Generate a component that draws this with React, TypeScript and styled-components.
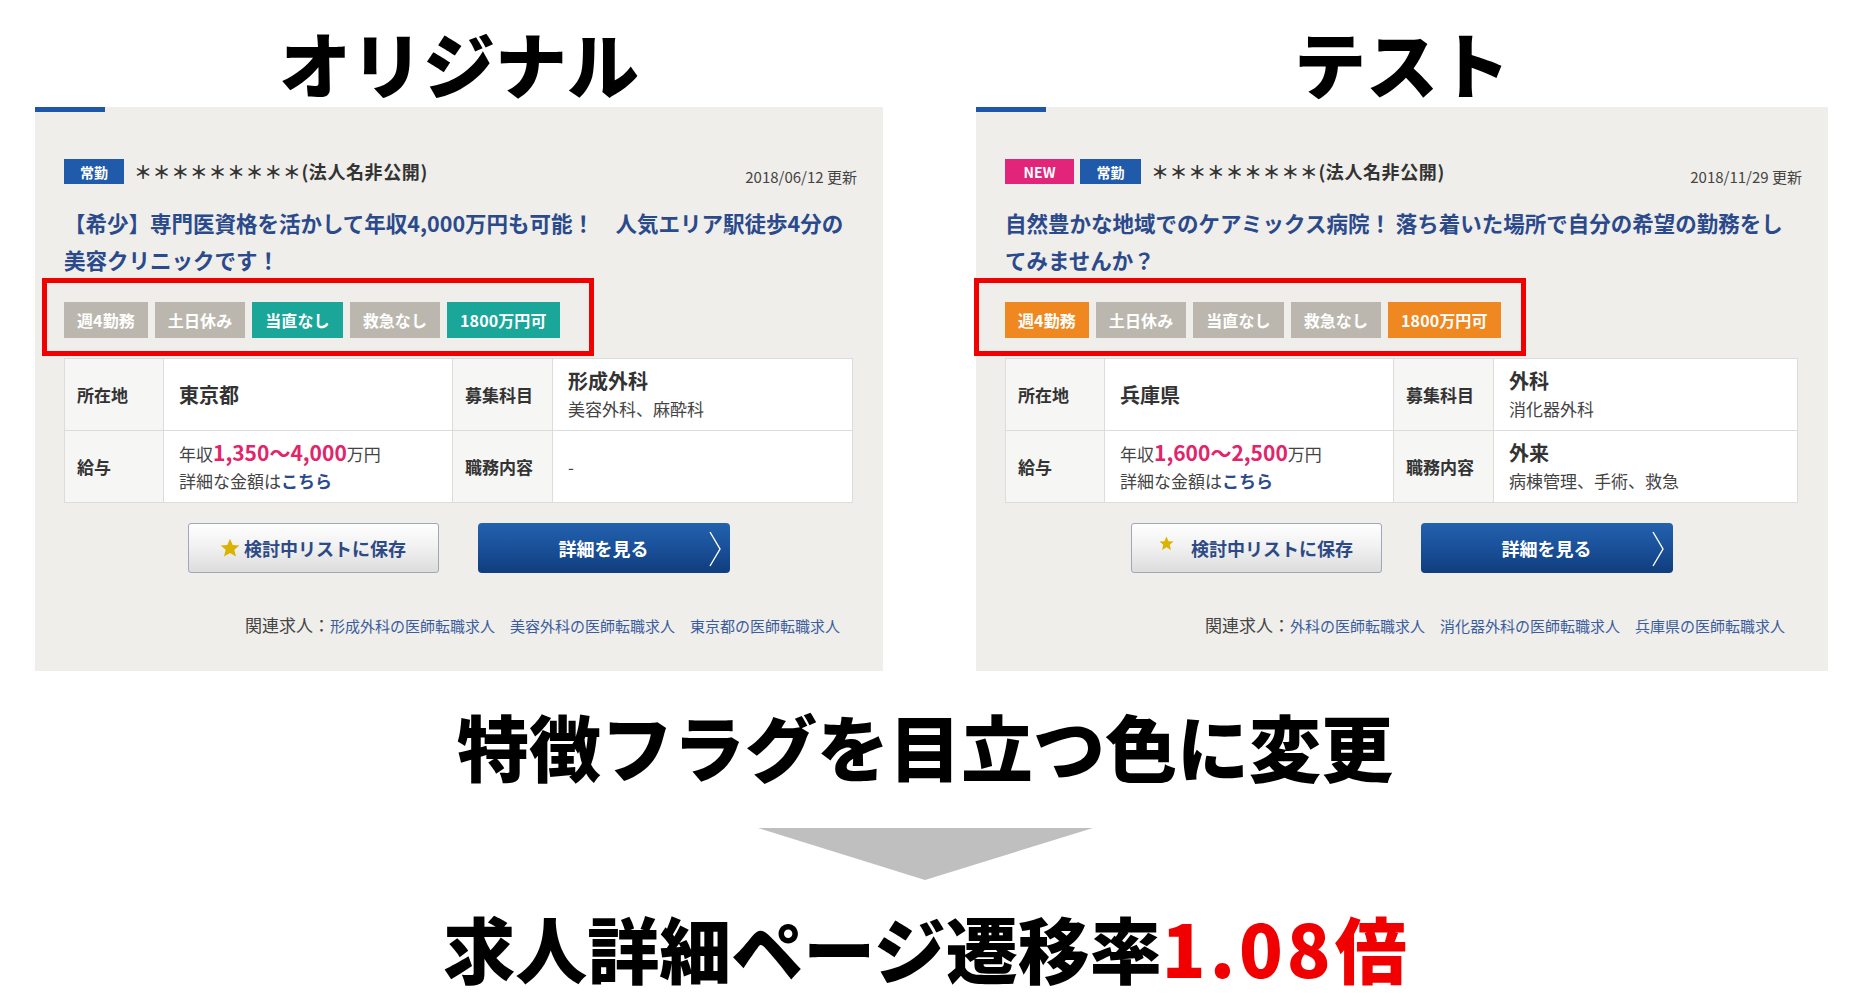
import React from 'react';
import styled, { createGlobalStyle } from 'styled-components';

type FlagTone = 'muted' | 'teal' | 'orange';
type BadgeTone = 'new' | 'regular';

interface Job {
  badges: { label: string; tone: BadgeTone; width: number }[];
  company: string;
  updated: string;
  titleLines: string[];
  flags: { label: string; tone: FlagTone }[];
  frameShift: number;
  location: string;
  department: string;
  subDepartments: string;
  salary: string;
  duty?: string;
  dutyDetail: string;
  related: string[];
  starSize: number;
  starGap: number;
  starLift: number;
}

// 全体
const GlobalStyle = createGlobalStyle`
  html, body {
    margin: 0;
    padding: 0;
    background: #ffffff;
  }
  body {
    font-family: 'Noto Sans CJK JP', 'Noto Sans', sans-serif;
    color: #333;
  }
`;

const Page = styled.main`
  width: 1850px;
  height: 1001px;
  overflow: hidden;
  display: flex;
  flex-direction: column;
`;

const Compare = styled.section`
  display: grid;
  grid-template-columns: 848px 852px;
  column-gap: 93px;
  padding-left: 35px;
  align-items: start;
`;

const Column = styled.div`
  display: flex;
  flex-direction: column;
`;

const VariantHeading = styled.h1`
  margin: 0;
  box-sizing: border-box;
  height: 107px;
  padding-top: 26px;
  font-size: 72px;
  line-height: 72px;
  font-weight: 900;
  color: #000;
  text-align: center;
`;

// カード
const Card = styled.article`
  background: #efeeea;
  padding: 0 30px 33px 29px;
  display: flex;
  flex-direction: column;
`;

const AccentBar = styled.div`
  width: 70px;
  height: 5px;
  margin-left: -29px;
  background: #1f57a8;
`;

const CardHeader = styled.div`
  display: flex;
  align-items: center;
  gap: 6px;
  margin-top: 47px;
`;

const Badge = styled.span<{ $tone: BadgeTone; $width: number }>`
  display: inline-flex;
  align-items: center;
  justify-content: center;
  width: ${p => p.$width}px;
  height: 25px;
  background: ${p => (p.$tone === 'new' ? '#e2247a' : '#1f5aab')};
  color: #fff;
  font-size: 14px;
  font-weight: 700;
`;

const Company = styled.span`
  margin-left: 4px;
  font-size: 18px;
  line-height: 25px;
  letter-spacing: 0.6px;
  font-weight: 700;
  color: #333;
`;

const UpdatedAt = styled.span`
  margin-left: auto;
  margin-right: -4px;
  align-self: flex-end;
  margin-bottom: -3px;
  font-size: 15px;
  line-height: 20px;
  color: #444;
`;

const JobTitle = styled.h2`
  margin: 20px 0 0;
  font-size: 21.5px;
  line-height: 37px;
  font-weight: 700;
  color: #2b4a8b;
`;

const FlagFrame = styled.div<{ $shift: number }>`
  align-self: flex-start;
  box-sizing: border-box;
  width: 552px;
  display: flex;
  gap: 7px;
  margin-left: -${p => p.$shift}px;
  padding: 19px 0 13px ${p => p.$shift - 5}px;
  border: 5px solid #f00000;
`;

const flagColors: Record<FlagTone, string> = {
  muted: '#bcb7ae',
  teal: '#1aa699',
  orange: '#ef8820',
};

const Flag = styled.span<{ $tone: FlagTone }>`
  display: inline-flex;
  align-items: center;
  height: 36px;
  padding: 0 13px;
  background: ${p => flagColors[p.$tone]};
  color: #fff;
  font-size: 16px;
  letter-spacing: 0.1px;
  font-weight: 700;
`;

// 表
const SpecGrid = styled.dl`
  margin: 2px 0 0;
  display: grid;
  grid-template-columns: 99px 289px 100px 1fr;
  grid-auto-rows: 72px;
  background: #fff;
  border-top: 1px solid #dcdcdc;
  border-left: 1px solid #dcdcdc;
`;

const SpecLabel = styled.dt`
  margin: 0;
  display: flex;
  align-items: center;
  padding-left: 12px;
  background: #f6f6f4;
  border-right: 1px solid #dcdcdc;
  border-bottom: 1px solid #dcdcdc;
  font-size: 17px;
  font-weight: 700;
  color: #333;
`;

const SpecValue = styled.dd`
  margin: 0;
  display: flex;
  flex-direction: column;
  justify-content: center;
  padding-left: 15px;
  border-right: 1px solid #dcdcdc;
  border-bottom: 1px solid #dcdcdc;
  font-size: 17px;
  line-height: 27px;
  color: #444;
`;

const ValueMain = styled.span`
  font-size: 20px;
  line-height: 28px;
  font-weight: 700;
  color: #333;
`;

const Amount = styled.span`
  font-size: 21px;
  font-weight: 700;
  color: #e2246a;
`;

const InlineLink = styled.a`
  font-weight: 700;
  color: #2b4a8b;
  text-decoration: none;
`;

// ボタン
const Actions = styled.div`
  display: flex;
  justify-content: center;
  gap: 39px;
  margin-top: 20px;
`;

const SaveButton = styled.button<{ $gap: number }>`
  width: 251px;
  height: 50px;
  display: flex;
  align-items: center;
  justify-content: center;
  gap: ${p => p.$gap}px;
  border: 1px solid #9ea8b9;
  border-radius: 3px;
  background: linear-gradient(#fefefe, #f2f2f2 45%, #dcdcdc);
  font-family: inherit;
  font-size: 18px;
  font-weight: 700;
  color: #2d4a86;
`;

const Star = styled.svg<{ $lift: number }>`
  transform: translateY(-${p => p.$lift}px);
`;

const DetailButton = styled.button`
  position: relative;
  width: 252px;
  height: 50px;
  border: none;
  border-radius: 4px;
  background: linear-gradient(#2361ae, #1a5099 50%, #103d7d);
  font-family: inherit;
  font-size: 18px;
  font-weight: 700;
  color: #fff;
`;

const Chevron = styled.svg`
  position: absolute;
  right: 8px;
  top: 8px;
`;

const Related = styled.p`
  align-self: flex-end;
  margin: 40px 13px 0 0;
  display: flex;
  align-items: baseline;
  font-size: 17px;
  line-height: 24px;
  color: #444;
`;

const RelatedLink = styled.a`
  font-size: 15px;
  color: #3b5c9d;
  text-decoration: none;

  & + & {
    margin-left: 15px;
  }
`;

// 結果
const Result = styled.section`
  display: flex;
  flex-direction: column;
  align-items: center;
  margin-top: 38px;
`;

const Headline = styled.p`
  margin: 0;
  font-size: 72px;
  line-height: 72px;
  font-weight: 900;
  color: #000;
`;

const Accent = styled.span`
  color: #f00000;
`;

const Digits = styled.span`
  letter-spacing: 4px;
`;

const DownArrow = styled.div`
  width: 0;
  height: 0;
  margin: 47px 0 31px;
  border-left: 167px solid transparent;
  border-right: 168px solid transparent;
  border-top: 52px solid #bfbfbf;
`;

const jobs: { heading: string; job: Job }[] = [
  {
    heading: 'オリジナル',
    job: {
      badges: [{ label: '常勤', tone: 'regular', width: 60 }],
      company: '＊＊＊＊＊＊＊＊＊(法人名非公開)',
      updated: '2018/06/12 更新',
      titleLines: ['【希少】専門医資格を活かして年収4,000万円も可能！　人気エリア駅徒歩4分の', '美容クリニックです！'],
      flags: [
        { label: '週4勤務', tone: 'muted' },
        { label: '土日休み', tone: 'muted' },
        { label: '当直なし', tone: 'teal' },
        { label: '救急なし', tone: 'muted' },
        { label: '1800万円可', tone: 'teal' },
      ],
      frameShift: 22,
      location: '東京都',
      department: '形成外科',
      subDepartments: '美容外科、麻酔科',
      salary: '1,350～4,000',
      dutyDetail: '-',
      related: ['形成外科の医師転職求人', '美容外科の医師転職求人', '東京都の医師転職求人'],
      starSize: 20,
      starGap: 4,
      starLift: 0,
    },
  },
  {
    heading: 'テスト',
    job: {
      badges: [
        { label: 'NEW', tone: 'new', width: 69 },
        { label: '常勤', tone: 'regular', width: 61 },
      ],
      company: '＊＊＊＊＊＊＊＊＊(法人名非公開)',
      updated: '2018/11/29 更新',
      titleLines: ['自然豊かな地域でのケアミックス病院！ 落ち着いた場所で自分の希望の勤務をし', 'てみませんか？'],
      flags: [
        { label: '週4勤務', tone: 'orange' },
        { label: '土日休み', tone: 'muted' },
        { label: '当直なし', tone: 'muted' },
        { label: '救急なし', tone: 'muted' },
        { label: '1800万円可', tone: 'orange' },
      ],
      frameShift: 31,
      location: '兵庫県',
      department: '外科',
      subDepartments: '消化器外科',
      salary: '1,600～2,500',
      duty: '外来',
      dutyDetail: '病棟管理、手術、救急',
      related: ['外科の医師転職求人', '消化器外科の医師転職求人', '兵庫県の医師転職求人'],
      starSize: 15,
      starGap: 17,
      starLift: 5,
    },
  },
];

const JobCard = ({ job }: { job: Job }) => (
  <Card>
    <AccentBar />
    <CardHeader>
      {job.badges.map(b => (
        <Badge key={b.label} $tone={b.tone} $width={b.width}>
          {b.label}
        </Badge>
      ))}
      <Company>{job.company}</Company>
      <UpdatedAt>{job.updated}</UpdatedAt>
    </CardHeader>

    <JobTitle>
      {job.titleLines.map((line, i) => (
        <React.Fragment key={i}>
          {i > 0 && <br />}
          {line}
        </React.Fragment>
      ))}
    </JobTitle>

    <FlagFrame $shift={job.frameShift}>
      {job.flags.map(f => (
        <Flag key={f.label} $tone={f.tone}>
          {f.label}
        </Flag>
      ))}
    </FlagFrame>

    <SpecGrid>
      <SpecLabel>所在地</SpecLabel>
      <SpecValue>
        <ValueMain>{job.location}</ValueMain>
      </SpecValue>
      <SpecLabel>募集科目</SpecLabel>
      <SpecValue>
        <ValueMain>{job.department}</ValueMain>
        <span>{job.subDepartments}</span>
      </SpecValue>
      <SpecLabel>給与</SpecLabel>
      <SpecValue>
        <span>
          年収<Amount>{job.salary}</Amount>万円
        </span>
        <span>
          詳細な金額は<InlineLink href="#">こちら</InlineLink>
        </span>
      </SpecValue>
      <SpecLabel>職務内容</SpecLabel>
      <SpecValue>
        {job.duty && <ValueMain>{job.duty}</ValueMain>}
        <span>{job.dutyDetail}</span>
      </SpecValue>
    </SpecGrid>

    <Actions>
      <SaveButton type="button" $gap={job.starGap}>
        <Star $lift={job.starLift} width={job.starSize} height={job.starSize} viewBox="0 0 20 20">
          <polygon
            points="10,0.8 12.7,7 19.4,7.4 14.3,11.8 16,18.6 10,15 4,18.6 5.7,11.8 0.6,7.4 7.3,7"
            fill="#d9b300"
          />
        </Star>
        検討中リストに保存
      </SaveButton>
      <DetailButton type="button">
        詳細を見る
        <Chevron width="14" height="36" viewBox="0 0 14 36">
          <polyline points="2,1 12,18 2,35" fill="none" stroke="#fff" strokeWidth="1.4" />
        </Chevron>
      </DetailButton>
    </Actions>

    <Related>
      関連求人：
      {job.related.map(r => (
        <RelatedLink key={r} href="#">
          {r}
        </RelatedLink>
      ))}
    </Related>
  </Card>
);

export default function App() {
  return (
    <Page>
      <GlobalStyle />
      <Compare>
        {jobs.map(({ heading, job }) => (
          <Column key={heading}>
            <VariantHeading>{heading}</VariantHeading>
            <JobCard job={job} />
          </Column>
        ))}
      </Compare>

      <Result>
        <Headline>特徴フラグを目立つ色に変更</Headline>
        <DownArrow />
        <Headline>
          求人詳細ページ遷移率
          <Accent>
            <Digits>1.08</Digits>倍
          </Accent>
        </Headline>
      </Result>
    </Page>
  );
}
